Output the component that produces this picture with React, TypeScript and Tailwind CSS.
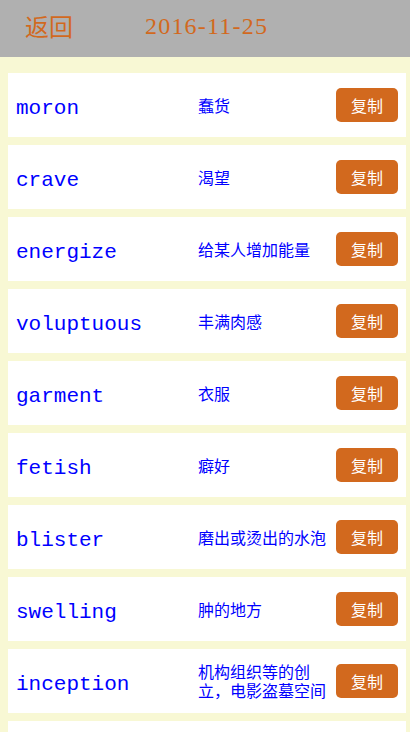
import React from "react";

const words: [string, string][] = [
  ["moron", "蠢货"],
  ["crave", "渴望"],
  ["energize", "给某人增加能量"],
  ["voluptuous", "丰满肉感"],
  ["garment", "衣服"],
  ["fetish", "癖好"],
  ["blister", "磨出或烫出的水泡"],
  ["swelling", "肿的地方"],
  ["inception", "机构组织等的创立，电影盗墓空间"],
];

export default function App() {
  return (
    <div className="min-h-screen bg-[#f8f8d4]">
      <div className="h-[57px] bg-[#b0b0b0] flex items-center pb-[6px]">
        <span className="ml-[25px] text-[24px] leading-none text-[#d2691e] font-['Noto_Sans_CJK_SC',sans-serif]">
          返回
        </span>
        <span className="ml-[72px] text-[24px] leading-none text-[#d2691e] tracking-[1.2px] font-['Liberation_Serif',serif]">
          2016-11-25
        </span>
      </div>
      <div className="pt-4 pl-2 pr-1 flex flex-col gap-2">
        {words.map(([w, m]) => (
          <div key={w} className="h-16 bg-white flex items-center">
            <div className="w-[190px] pl-2 pt-[7px] text-[21px] text-[#0000ff] font-['Liberation_Mono',monospace]">
              {w}
            </div>
            <div className="flex-1 pr-1 text-[16px] leading-[19px] text-[#0000ff] font-['Noto_Sans_CJK_SC',sans-serif]">
              {m}
            </div>
            <button className="mr-2 w-[62px] h-[34px] rounded-[5px] bg-[#d2691e] text-white text-[16px] flex items-center justify-center font-['Noto_Sans_CJK_SC',sans-serif]">
              复制
            </button>
          </div>
        ))}
        <div className="h-16 bg-white" />
      </div>
    </div>
  );
}
